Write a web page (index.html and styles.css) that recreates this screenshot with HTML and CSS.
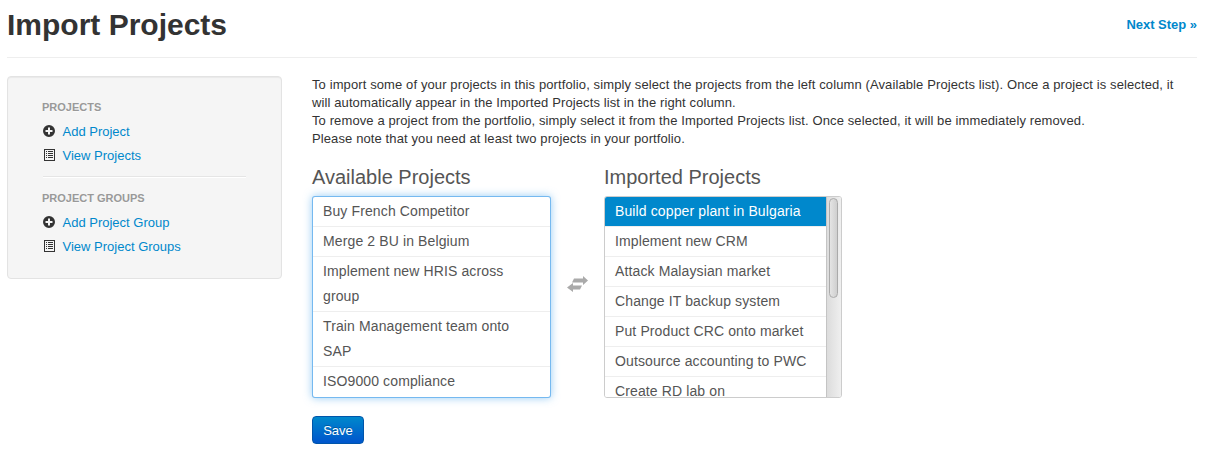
FILE: index.html
```html
<!DOCTYPE html>
<html lang="en">
<head>
  <meta charset="UTF-8">
  <meta name="viewport" content="width=device-width, initial-scale=1.0">
  <title>Import Projects</title>
  <link rel="stylesheet" href="styles.css">
</head>
<body>
  <div class="page-header">
    <h1>Import Projects</h1>
    <a class="next-step" href="#">Next Step »</a>
  </div>

  <div class="main">
    <div class="sidebar">
      <div class="nav-header">Projects</div>
      <a class="nav-link" href="#">
        <svg class="icon" viewBox="0 0 14 14"><path fill-rule="evenodd" d="M7 1a6 6 0 1 0 0 12a6 6 0 0 0 0-12zM6 3.5h2V6h2.5v2H8v2.5H6V8H3.5V6H6z"/></svg>
        Add Project
      </a>
      <a class="nav-link" href="#">
        <svg class="icon" viewBox="0 0 14 14"><path fill-rule="evenodd" d="M2 1h11v12H2zM3 2v10h9V2zM4 3h1v1H4zM6 3h5v1H6zM4 5h1v1H4zM6 5h5v1H6zM4 7h1v1H4zM6 7h5v1H6zM4 9h1v1H4zM6 9h5v1H6z"/></svg>
        View Projects
      </a>
      <div class="divider"></div>
      <div class="nav-header">Project Groups</div>
      <a class="nav-link" href="#">
        <svg class="icon" viewBox="0 0 14 14"><path fill-rule="evenodd" d="M7 1a6 6 0 1 0 0 12a6 6 0 0 0 0-12zM6 3.5h2V6h2.5v2H8v2.5H6V8H3.5V6H6z"/></svg>
        Add Project Group
      </a>
      <a class="nav-link" href="#">
        <svg class="icon" viewBox="0 0 14 14"><path fill-rule="evenodd" d="M2 1h11v12H2zM3 2v10h9V2zM4 3h1v1H4zM6 3h5v1H6zM4 5h1v1H4zM6 5h5v1H6zM4 7h1v1H4zM6 7h5v1H6zM4 9h1v1H4zM6 9h5v1H6z"/></svg>
        View Project Groups
      </a>
    </div>

    <div class="content">
      <p class="intro">To import some of your projects in this portfolio, simply select the projects from the left column (Available Projects list). Once a project is selected, it will automatically appear in the Imported Projects list in the right column.<br>
      To remove a project from the portfolio, simply select it from the Imported Projects list. Once selected, it will be immediately removed.<br>
      Please note that you need at least two projects in your portfolio.</p>

      <div class="pickers">
        <div class="picker">
          <h3>Available Projects</h3>
          <ul class="project-list focused">
            <li>Buy French Competitor</li>
            <li>Merge 2 BU in Belgium</li>
            <li>Implement new HRIS across group</li>
            <li>Train Management team onto SAP</li>
            <li>ISO9000 compliance</li>
          </ul>
        </div>
        <svg class="swap" viewBox="0 0 22 16"><path d="M7 2.5h9V0l5 4.5L16 9V6.5H5zM15 9.5H6V7l-6 4.5L6 16v-2.5h7z"/></svg>
        <div class="picker">
          <h3>Imported Projects</h3>
          <div class="list-box">
            <ul class="project-list scrolling">
              <li class="selected">Build copper plant in Bulgaria</li>
              <li>Implement new CRM</li>
              <li>Attack Malaysian market</li>
              <li>Change IT backup system</li>
              <li>Put Product CRC onto market</li>
              <li>Outsource accounting to PWC</li>
              <li>Create RD lab on</li>
            </ul>
            <div class="scrollbar"><div class="scroll-thumb"></div></div>
          </div>
        </div>
      </div>

      <button class="btn-save">Save</button>
    </div>
  </div>
</body>
</html>
```

FILE: styles.css
```css
/* Basic layout */
body {
  margin: 0;
  padding: 0 13px 0 7px;
  font-family: "Liberation Sans", Arial, sans-serif;
  font-size: 13px;
  line-height: 18px;
  color: #333;
  background-color: #fff;
}

a {
  color: #0088cc;
  text-decoration: none;
}

/* Header */
.page-header {
  display: flex;
  justify-content: space-between;
  align-items: center;
  height: 57px;
  border-bottom: 1px solid #eee;
  margin-bottom: 18px;
}

h1 {
  margin: 0 0 7px;
  font-size: 30px;
  line-height: 50px;
  font-weight: bold;
}

.next-step {
  font-weight: bold;
  margin-bottom: 7px;
  letter-spacing: -0.02px;
}

.main {
  display: flex;
  align-items: flex-start;
}

/* Sidebar */
.sidebar {
  box-sizing: border-box;
  width: 275px;
  height: 203px;
  margin-right: 30px;
  padding: 21px 35px 0 34px;
  background-color: #f5f5f5;
  border: 1px solid #e3e3e3;
  border-radius: 4px;
  box-shadow: inset 0 1px 1px rgba(0, 0, 0, 0.05);
}

.nav-header {
  font-size: 11px;
  line-height: 24px;
  font-weight: bold;
  color: #999;
  text-transform: uppercase;
  text-shadow: 0 1px 0 rgba(255, 255, 255, 0.5);
  margin-top: -3px;
  margin-bottom: 1px;
}

.nav-link {
  display: flex;
  align-items: center;
  line-height: 24px;
}

.icon {
  width: 14px;
  height: 14px;
  margin-right: 6.5px;
  margin-top: -2px;
  fill: #333;
}

.divider {
  height: 1px;
  margin: 8px 0 11px 1px;
  width: 203px;
  background-color: #e5e5e5;
  border-bottom: 1px solid #fff;
}

/* Content */
.content {
  flex: 1;
}

.intro {
  margin: 0 0 16px;
  padding-right: 10px;
  letter-spacing: 0.11px;
}

.pickers {
  display: flex;
  align-items: flex-start;
}

.picker {
  width: 238px;
}

h3 {
  margin: 0 0 5px;
  font-size: 20px;
  line-height: 27px;
  font-weight: normal;
  color: #555;
}

.project-list {
  box-sizing: border-box;
  height: 202px;
  margin: 0;
  padding: 0;
  list-style: none;
  overflow: hidden;
  background-color: #fff;
  border: 1px solid #ccc;
  border-radius: 3px;
  font-size: 14px;
  line-height: 25px;
  letter-spacing: 0.12px;
  color: #555;
}

.project-list li {
  padding: 2px 10px;
  border-bottom: 1px solid #eee;
}

.project-list li:last-child {
  border-bottom: none;
}

.focused {
  width: 239px;
  border-color: rgba(82, 168, 236, 0.8);
  box-shadow: 0 0 8px rgba(82, 168, 236, 0.6);
}

/* Imported list with its scrollbar */
.list-box {
  display: flex;
  height: 202px;
  box-sizing: border-box;
  border: 1px solid #ccc;
  border-radius: 3px;
  overflow: hidden;
}

.scrolling {
  flex: 1;
  height: auto;
  border: none;
  border-radius: 0;
}

.scrollbar {
  box-sizing: border-box;
  width: 15px;
  padding: 1px 3px 0 2px;
  background: linear-gradient(to right, #dcdcdc, #efefef);
  border-left: 1px solid #c4c4c4;
}

.scroll-thumb {
  height: 100px;
  box-sizing: border-box;
  background: linear-gradient(to right, #e4e4e4, #cfcfcf);
  border: 1px solid #aaa;
  border-radius: 5px;
}

.selected {
  background-color: #0088cc;
  color: #fff;
}

.swap {
  width: 22px;
  height: 16px;
  fill: #aaa;
  margin: 112px 15px 0 17px;
}

/* Save button */
.btn-save {
  display: block;
  margin-top: 18px;
  width: 52px;
  height: 28px;
  padding: 0;
  font-family: inherit;
  font-size: 13px;
  color: #fff;
  text-shadow: 0 -1px 0 rgba(0, 0, 0, 0.25);
  background: linear-gradient(to bottom, #0088cc, #0055cc);
  border: 1px solid #0055aa;
  border-radius: 4px;
  cursor: pointer;
}
```
